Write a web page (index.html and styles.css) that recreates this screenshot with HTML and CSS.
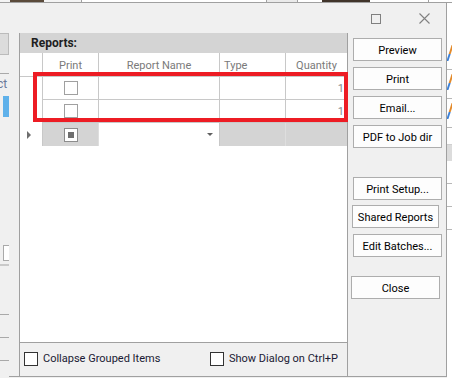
FILE: index.html
```html
<!DOCTYPE html>
<html>
  <head>
    <title>Print Reports</title>
    <meta charset="utf-8" />
    <link rel="stylesheet" href="styles.css">
  </head>
  <body>
    <div class="screen">
      <!-- strip of the window behind the dialog -->
      <div class="behind-top">
        <span class="bt-text"></span>
        <span class="bt-white"></span>
        <span class="bt-cell"></span>
        <span class="bt-text2"></span>
      </div>

      <div class="main">
        <div class="behind-left">
          <div class="bl-box"></div>
          <div class="bl-line"></div>
          <div class="bl-text">ct</div>
          <div class="bl-blue"></div>
          <div class="bl-space"></div>
          <div class="bl-box2"></div>
          <div class="bl-line bl-line2"></div>
          <div class="bl-line bl-line3"></div>
          <div class="bl-line bl-line4"></div>
          <div class="bl-line bl-line5"></div>
        </div>

        <div class="dialog">
          <div class="titlebar">
            <span class="win-max"></span>
            <svg class="win-close" width="11" height="11" viewBox="0 0 11 11">
              <path d="M0.5 0.5 L10.5 10.5 M10.5 0.5 L0.5 10.5" stroke="#808080" stroke-width="1.1" fill="none" />
            </svg>
          </div>

          <div class="dialog-body">
            <div class="reports">
              <div class="reports-head">Reports:</div>

              <div class="grid-area">
                <div class="grid-row head">
                  <div class="cell ind"></div>
                  <div class="cell">Print</div>
                  <div class="cell">Report Name</div>
                  <div class="cell left">Type</div>
                  <div class="cell last">Quantity</div>
                </div>
                <div class="grid-row data">
                  <div class="cell ind"></div>
                  <div class="cell"><span class="check"></span></div>
                  <div class="cell"></div>
                  <div class="cell"></div>
                  <div class="cell last num">1</div>
                </div>
                <div class="grid-row data">
                  <div class="cell ind"></div>
                  <div class="cell"><span class="check"></span></div>
                  <div class="cell"></div>
                  <div class="cell"></div>
                  <div class="cell last num">1</div>
                </div>
                <div class="grid-row newrow">
                  <div class="cell ind"><span class="row-arrow"></span></div>
                  <div class="cell grey"><span class="check mixed"><span></span></span></div>
                  <div class="cell combo"><span class="combo-arrow"></span></div>
                  <div class="cell grey"></div>
                  <div class="cell grey last"></div>
                </div>
              </div>

              <div class="reports-foot">
                <label class="opt opt-left"><span class="box"></span>Collapse Grouped Items</label>
                <label class="opt"><span class="box"></span>Show Dialog on Ctrl+P</label>
              </div>
            </div>

            <div class="actions">
              <button class="btn">Preview</button>
              <button class="btn gap6">Print</button>
              <button class="btn gap6">Email...</button>
              <button class="btn gap6">PDF to Job dir</button>
              <button class="btn setup">Print Setup...</button>
              <button class="btn shared">Shared Reports</button>
              <button class="btn gap6">Edit Batches...</button>
              <button class="btn close">Close</button>
            </div>
          </div>
        </div>

        <div class="behind-right">
          <div class="br-row"><span class="slash"></span></div>
          <div class="br-row"><span class="slash"></span></div>
          <div class="br-row"><span class="slash"></span></div>
          <div class="br-blank"></div>
          <div class="br-grey"></div>
          <div class="br-row small"></div>
          <div class="br-row small"></div>
          <div class="br-row small"></div>
        </div>
      </div>

      <!-- red highlight drawn over the grid -->
      <div class="highlight"></div>
    </div>
  </body>
</html>
```

FILE: styles.css
```css
body {
  margin: 0;
  background: #f0f0f0;
  font-family: Roboto, "Noto Sans", sans-serif;
  font-size: 11px;
  color: #000;
}

.screen {
  position: relative;
  width: 452px;
  height: 378px;
  overflow: hidden;
}

/* window behind */
.behind-top {
  height: 2px;
  display: flex;
  background: #fff;
  border-bottom: 1px solid #a0a0a0;
  overflow: hidden;
}
.bt-text {
  flex: none;
  width: 81px;
  border-right: 1px solid #a0a0a0;
  background-image: linear-gradient(90deg, #f4f4f4 10px, #5a4a3a 10px, #5a4a3a 44px, #f4f4f4 44px);
}
.bt-white {
  flex: none;
  width: 184px;
}
.bt-cell {
  flex: none;
  width: 30px;
  background: #eaeaea;
  border-left: 1px solid #a0a0a0;
  border-right: 1px solid #a0a0a0;
}
.bt-text2 {
  flex: none;
  width: 130px;
  background-image: linear-gradient(90deg, #fff 24px, #40342a 24px, #40342a 72px, #fff 72px);
  border-right: 1px solid #a0a0a0;
}

.main {
  display: flex;
  height: 375px;
}

.behind-left {
  flex: none;
  width: 9px;
  background: #f0f0f0;
  overflow: hidden;
  padding-top: 30px;
  box-sizing: border-box;
}
.bl-box {
  height: 22px;
  width: 9px;
  background: #dcdcdc;
  border: 1px solid #bbb;
  border-left: 0;
  box-sizing: border-box;
}
.bl-line {
  height: 1px;
  background: #a9a9a9;
  margin-top: 18px;
}
.bl-text {
  height: 22px;
  line-height: 20px;
  font-size: 12px;
  color: #6a7a99;
  text-indent: -3px;
}
.bl-blue {
  margin-left: 3px;
  height: 21px;
  background: #5fb1ea;
}
.bl-space {
  height: 128px;
}
.bl-box2 {
  margin-left: 3px;
  height: 14px;
  border: 1px solid #a9a9a9;
  border-right: 0;
  background: #fff;
}
.bl-line2 {
  margin-top: 3px;
  height: 2px;
  background: #c9c9c9;
}
.bl-line3 {
  margin-top: 48px;
}
.bl-line4 {
  margin-top: 22px;
}
.bl-line5 {
  margin-top: 22px;
}

.behind-right {
  flex: 1;
  min-width: 0;
  background: #fff;
  padding-top: 38px;
  overflow: hidden;
}
.br-row {
  height: 28px;
  border-bottom: 1px solid #b8b8b8;
  overflow: hidden;
}
.br-row.small {
  height: 22px;
}
.slash {
  display: block;
  width: 2px;
  height: 16px;
  margin: 4px 0 0 2px;
  background: linear-gradient(#e38a2b 55%, #3b7fd6 55%);
  transform: skewX(-18deg);
}
.br-blank {
  height: 16px;
  border-bottom: 1px solid #d0d0d0;
}
.br-grey {
  height: 16px;
  background: #dcdcdc;
}

/* dialog */
.dialog {
  flex: none;
  width: 438px;
  background: #f0f0f0;
  border-right: 1px solid #a0a0a0;
  border-bottom: 1px solid #a0a0a0;
  box-sizing: border-box;
  height: 374px;
}

.titlebar {
  height: 30px;
  display: flex;
  align-items: center;
  justify-content: flex-end;
  padding-right: 16px;
  gap: 38px;
}
.win-max {
  width: 10px;
  height: 10px;
  border: 1px solid #808080;
  box-sizing: border-box;
  margin-top: 1px;
}
.win-close {
  margin-top: 1px;
}

.dialog-body {
  display: flex;
  height: 343px;
  padding-left: 10px;
}

.reports {
  flex: none;
  width: 329px;
  border-left: 1px solid #a0a0a0;
  border-right: 1px solid #a0a0a0;
  box-sizing: border-box;
  display: flex;
  flex-direction: column;
}

.reports-head {
  height: 20px;
  line-height: 21px;
  background: #d4d4d4;
  padding-left: 11px;
  font-weight: bold;
  font-size: 12px;
  color: #1e1e1e;
}

.grid-area {
  height: 289px;
  background: #fff;
  border-bottom: 1px solid #a0a0a0;
}

.grid-row {
  display: grid;
  grid-template-columns: 23px 56px 121px 66px 61px;
  height: 23px;
}
.grid-row.head {
  height: 24px;
}

.cell {
  box-sizing: border-box;
  border-right: 1px solid #c8c8c8;
  display: flex;
  align-items: center;
  justify-content: center;
}
.cell.last {
  border-right: 0;
}

.head .cell {
  border-bottom: 1px solid #c8c8c8;
  color: #7a7a7a;
  padding-top: 1px;
}
.head .cell.left {
  justify-content: flex-start;
  padding-left: 4px;
}

.data .cell {
  border-bottom: 1px solid #c8c8c8;
}
.data .cell.ind {
  border-bottom: 0;
}
.cell.num {
  justify-content: flex-end;
  padding-right: 3px;
  color: #8a8a8a;
}

.newrow .cell.grey {
  background: #d4d4d4;
  border-right-color: #dedede;
}
.newrow .cell.combo {
  justify-content: flex-end;
  padding-right: 6px;
}

.check {
  width: 14px;
  height: 14px;
  box-sizing: border-box;
  border: 1px solid #a0a0a0;
  background: #fff;
  display: flex;
  align-items: center;
  justify-content: center;
}
.check.mixed {
  border-color: #8c8c8c;
}
.check.mixed span {
  width: 6px;
  height: 6px;
  background: #6e6e6e;
}

.row-arrow {
  width: 0;
  height: 0;
  border-top: 4px solid transparent;
  border-bottom: 4px solid transparent;
  border-left: 4px solid #6e6e6e;
  margin-right: 5px;
}
.combo-arrow {
  width: 0;
  height: 0;
  border-left: 3px solid transparent;
  border-right: 3px solid transparent;
  border-top: 3px solid #606060;
}

.reports-foot {
  flex: 1;
  display: flex;
  align-items: center;
  padding-left: 4px;
  padding-bottom: 2px;
  color: #1a1a33;
}
.opt {
  display: flex;
  align-items: center;
  gap: 5px;
  white-space: nowrap;
}
.opt-left {
  width: 186px;
}
.box {
  flex: none;
  width: 14px;
  height: 14px;
  box-sizing: border-box;
  border: 1px solid #333;
  background: #fff;
}

.actions {
  flex: none;
  width: 98px;
  display: flex;
  flex-direction: column;
  align-items: flex-start;
  padding-top: 5px;
  box-sizing: border-box;
}

.btn {
  width: 89px;
  height: 23px;
  margin-left: 5px;
  padding: 1px 0 0;
  border: 1px solid #adadad;
  background: #fdfdfd;
  font-family: Roboto, "Noto Sans", sans-serif;
  font-size: 11px;
  color: #000;
  white-space: nowrap;
}
.gap6 {
  margin-top: 6px;
}
.setup {
  margin-top: 29px;
}
.shared {
  margin-top: 5px;
  margin-left: 4px;
  width: 87px;
}
.close {
  margin-top: 19px;
  margin-left: 3px;
}

.highlight {
  position: absolute;
  left: 33px;
  top: 72px;
  width: 315px;
  height: 50px;
  border: 4px solid #ed1c24;
  box-sizing: border-box;
}
```
